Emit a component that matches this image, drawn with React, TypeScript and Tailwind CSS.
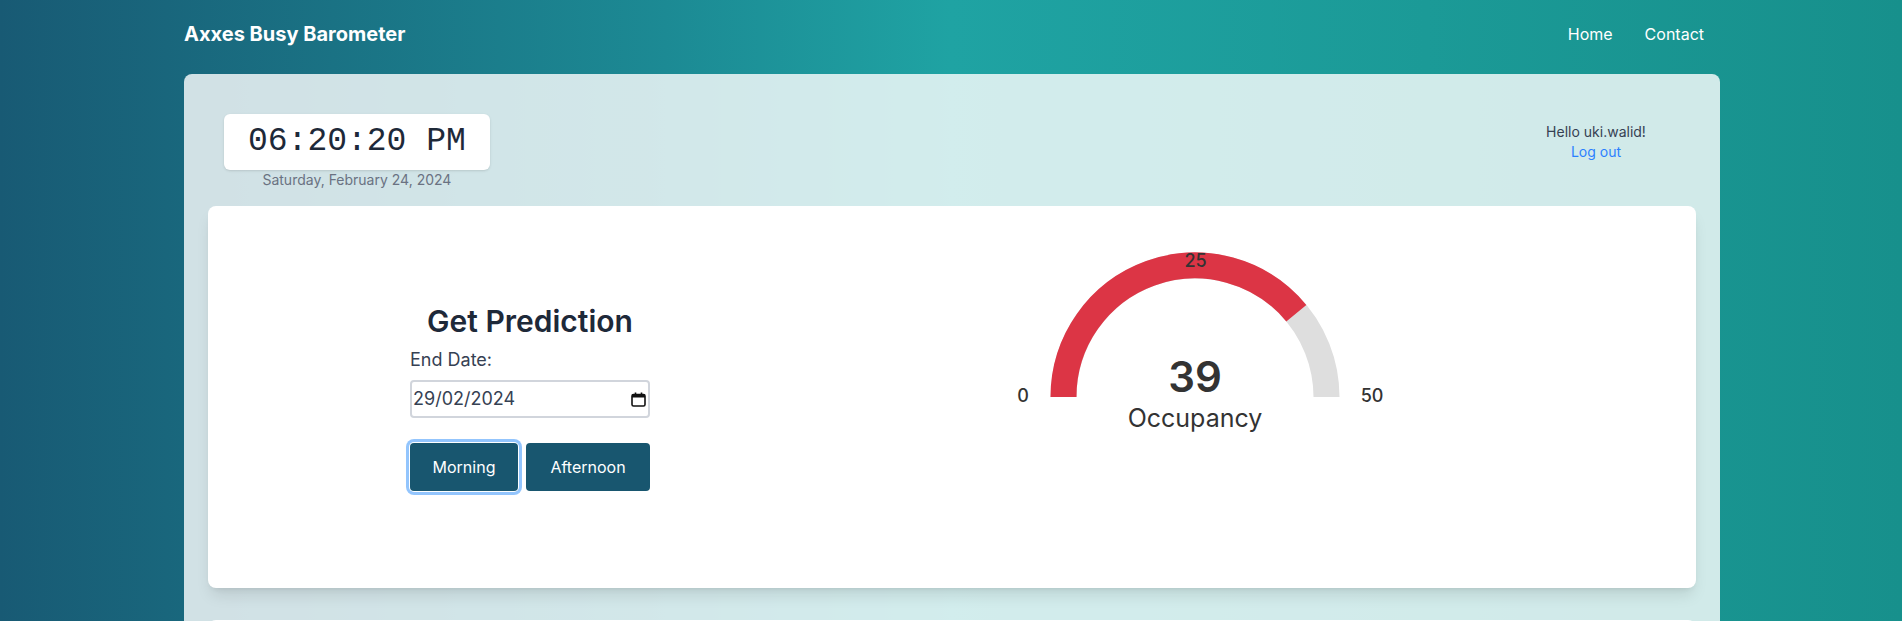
import React from 'react';

// Gauge geometry (svg coords)
const CX = 200;
const CY = 150;
const R = 131.5;
const VALUE = 39;
const MAX = 50;

const arcEnd = (fraction: number) => {
  const angle = Math.PI - fraction * Math.PI;
  return { x: CX + R * Math.cos(angle), y: CY - R * Math.sin(angle) };
};

const CalendarIcon: React.FC = () => (
  <svg width="15" height="15" viewBox="0 0 15 15" fill="none">
    <rect x="1" y="2.5" width="13" height="11.5" rx="1.5" stroke="#111" strokeWidth="1.6" />
    <rect x="1" y="2.5" width="13" height="3" fill="#111" />
    <line x1="4.5" y1="0.5" x2="4.5" y2="3" stroke="#111" strokeWidth="1.6" />
    <line x1="10.5" y1="0.5" x2="10.5" y2="3" stroke="#111" strokeWidth="1.6" />
  </svg>
);

const Gauge: React.FC = () => {
  const end = arcEnd(VALUE / MAX);
  return (
    <svg width="400" height="300" viewBox="0 0 400 300" className="shrink-0">
      <path
        d={`M ${CX - R} ${CY} A ${R} ${R} 0 0 1 ${CX + R} ${CY}`}
        stroke="#dedede"
        strokeWidth="26"
        fill="none"
      />
      <path
        d={`M ${CX - R} ${CY} A ${R} ${R} 0 0 1 ${end.x} ${end.y}`}
        stroke="#dc3545"
        strokeWidth="26"
        fill="none"
      />
      <g fontFamily="Inter, sans-serif" fill="#333">
        <text x="200.5" y="20" fontSize="18" fontWeight="500" textAnchor="middle">25</text>
        <text x="28" y="155" fontSize="18" fontWeight="500" textAnchor="middle">0</text>
        <text x="377" y="155" fontSize="18" fontWeight="500" textAnchor="middle">50</text>
        <text x="200" y="145" fontSize="42" fontWeight="600" textAnchor="middle">{VALUE}</text>
        <text x="200" y="180" fontSize="25" fontWeight="400" textAnchor="middle">Occupancy</text>
      </g>
    </svg>
  );
};

const App: React.FC = () => {
  return (
    <div className="min-h-screen bg-[linear-gradient(90deg,#185a74_0%,#1c8a94_35%,#1fa3a3_50%,#1b9a97_75%,#17908c_100%)] pl-[2px] font-['Inter',sans-serif]">
      {/* Top nav */}
      <nav className="mx-auto flex h-[68px] max-w-screen-2xl items-center justify-between">
        <span className="text-xl font-bold text-white">Axxes Busy Barometer</span>
        <div className="flex items-center text-base text-white">
          <a className="px-4">Home</a>
          <a className="px-4">Contact</a>
        </div>
      </nav>

      <main className="mx-auto mt-[6px] max-w-screen-2xl rounded-lg bg-white/80 p-6">
        {/* Header row */}
        <div className="flex items-start justify-between px-4 pt-4">
          <div className="flex flex-col items-center">
            <div className="flex h-14 items-center rounded-md bg-white px-6 shadow-sm">
              <span className="font-['Liberation_Mono',monospace] text-[33px] text-gray-800">06:20:20 PM</span>
            </div>
            <span className="text-sm leading-5 text-gray-500">Saturday, February 24, 2024</span>
          </div>
          <div className="mt-2 flex w-[168px] flex-col items-center text-sm leading-5">
            <span className="text-gray-700">Hello uki.walid!</span>
            <a className="text-blue-500">Log out</a>
          </div>
        </div>

        {/* Prediction panel */}
        <section className="mt-4 flex h-[382px] items-center rounded-lg bg-white shadow-lg">
          <div className="ml-[202px] flex w-[240px] flex-col">
            <h2 className="text-center text-3xl font-semibold text-gray-800">Get Prediction</h2>
            <label className="mt-[7px] text-lg text-gray-700">End Date:</label>
            <div className="mt-[6px] flex h-[38px] items-center justify-between rounded border-2 border-gray-300 pl-px pr-[2px] text-lg text-gray-700">
              <span>29/02/2024</span>
              <CalendarIcon />
            </div>
            <div className="mt-[25px] flex gap-2">
              <button className="h-12 w-[108px] rounded bg-[#18566f] text-base font-normal text-white ring-[3px] ring-[#93c5fd] ring-offset-1">
                Morning
              </button>
              <button className="h-12 w-[124px] rounded bg-[#18566f] text-base font-normal text-white">
                Afternoon
              </button>
            </div>
          </div>
          <div className="ml-[345px]">
            <Gauge />
          </div>
        </section>

        <section className="mt-8 h-[400px] rounded-lg bg-white shadow-lg" />
      </main>
    </div>
  );
};

export default App;
